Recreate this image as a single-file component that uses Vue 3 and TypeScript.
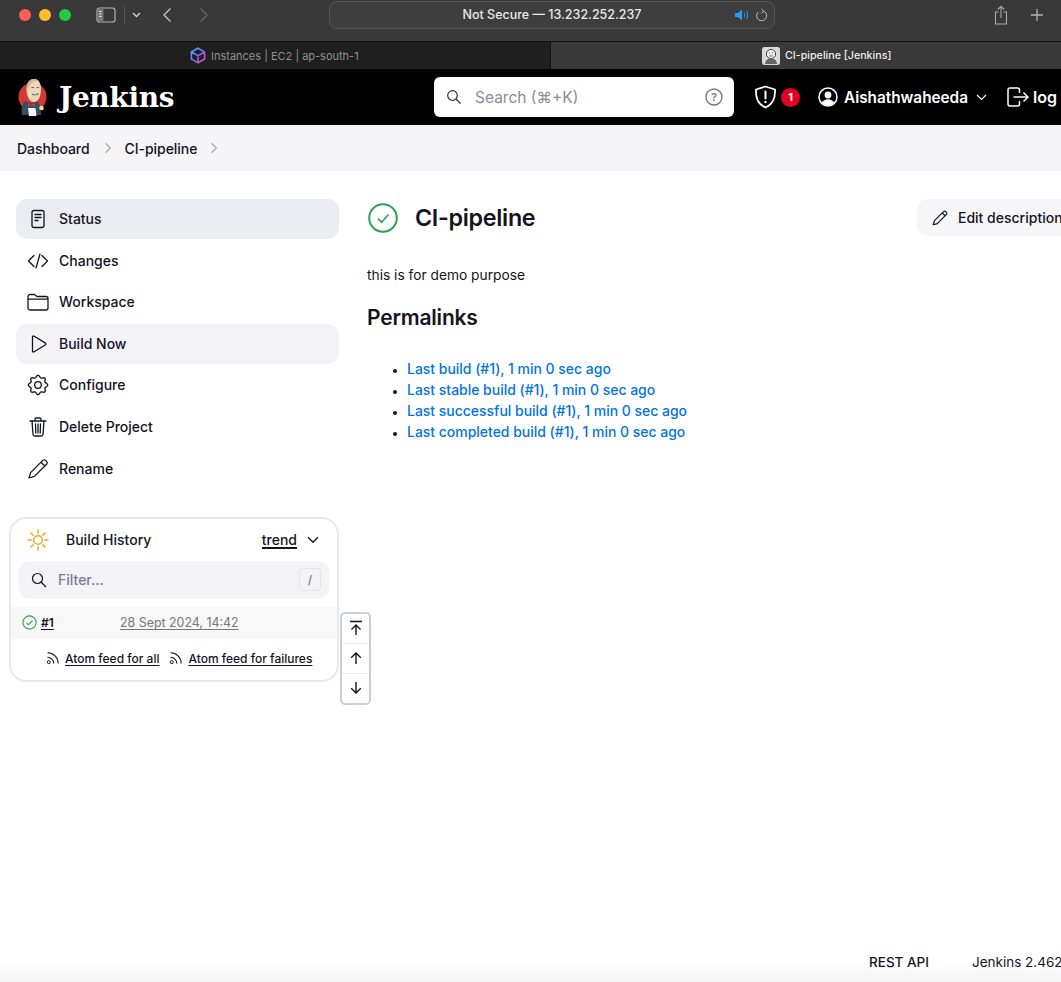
<script setup lang="ts">
interface NavItem { label: string; d: string; active?: boolean; hover?: boolean; circle?: boolean }

const cog = (): string => {
  const pts: string[] = []
  for (let i = 0; i <= 96; i++) {
    const t = (i / 96) * Math.PI * 2
    const r = 8.6 + 1.1 * Math.cos(t * 8)
    pts.push(`${(12 + r * Math.cos(t)).toFixed(2)} ${(12 + r * Math.sin(t)).toFixed(2)}`)
  }
  return 'M' + pts.join('L') + 'Z'
}

const nav: NavItem[] = [
  { label: 'Status', active: true, d: 'M8 3.500h8a2 2 0 0 1 2 2v13a2 2 0 0 1-2 2H8a2 2 0 0 1-2-2v-13a2 2 0 0 1 2-2zM9 7.500h6M9 10.500h6M9 13.500h3' },
  { label: 'Changes', d: 'M8 6.500 2.500 12 8 17.500M16 6.500l5.500 5.500-5.500 5.500M14 5l-4 14' },
  { label: 'Workspace', d: 'M2 8V6.500A2 2 0 0 1 4 4.500h4.500l2.500 2h9a2 2 0 0 1 2 2v9.500a2 2 0 0 1-2 2H4a2 2 0 0 1-2-2zM2 9.200h20' },
  { label: 'Build Now', hover: true, d: 'M6.500 5.200c0-1 .9-1.500 1.700-1l11 6.700c.8.500.8 1.600 0 2.100l-11 6.800c-.8.500-1.700 0-1.700-1z' },
  { label: 'Configure', circle: true, d: cog() },
  { label: 'Delete Project', d: 'M4 6h16M9 6V4.200C9 3.500 9.500 3 10.200 3h3.600c.7 0 1.200.5 1.200 1.200V6M6 6l1 13.500c.1.900.8 1.500 1.700 1.500h6.600c.9 0 1.600-.6 1.700-1.500L18 6M9.500 9l.3 9M12 9v9M14.500 9l-.3 9' },
  { label: 'Rename', d: 'M3 21l1.600-5.400L16.800 3.400c.8-.8 2-.8 2.800 0l1 1c.8.8.8 2 0 2.800L8.400 19.400zM15 5.200l3.800 3.800' },
]

const links: string[] = [
  'Last build (#1), 1 min 0 sec ago',
  'Last stable build (#1), 1 min 0 sec ago',
  'Last successful build (#1), 1 min 0 sec ago',
  'Last completed build (#1), 1 min 0 sec ago',
]
const feeds: string[] = ['Atom feed for all', 'Atom feed for failures']
const rays: number[] = [0, 45, 90, 135, 180, 225, 270, 315]
</script>

<template>
  <div class="page">
    <div class="toolbar">
      <div class="lights"><i class="red"></i><i class="amber"></i><i class="green"></i></div>
      <svg class="side-ico" width="20" height="16" viewBox="0 0 20 16"><rect x="1" y="1" width="18" height="14" rx="2.500" fill="none" stroke="#b5b5b5" stroke-width="1.200"/><rect x="1.500" y="1.500" width="6" height="13" rx="1.500" fill="#777"/><path d="M3 4.500h2.500M3 7h2.500M3 9.500h2.500" stroke="#ddd"/></svg>
      <span class="sep"></span>
      <svg class="drop" width="9" height="6" viewBox="0 0 9 6"><path d="M1 1l3.500 3.500L8 1" fill="none" stroke="#c9c9c9" stroke-width="1.500"/></svg>
      <svg class="back" width="10" height="16" viewBox="0 0 10 16"><path d="M8.500 1.500 2 8l6.500 6.500" fill="none" stroke="#b9b9b9" stroke-width="1.500"/></svg>
      <svg class="fwd" width="10" height="16" viewBox="0 0 10 16"><path d="M1.500 1.500 8 8l-6.500 6.500" fill="none" stroke="#626262" stroke-width="1.500"/></svg>
      <div class="url">
        <span class="url-text">Not Secure — 13.232.252.237</span>
        <svg class="speaker" width="15" height="12" viewBox="0 0 15 12"><path d="M0 4h3l4-3.500v11L3 8H0z" fill="#2a9df4"/><path d="M9 3.500c1 1.400 1 3.600 0 5M11.500 2c1.600 2.400 1.600 5.600 0 8" fill="none" stroke="#2a9df4"/></svg>
        <svg class="reload" width="13" height="14" viewBox="0 0 13 14"><path d="M8.500 3.100A5 5 0 1 1 3.300 4M6.300 1l2.300 2.100-2.100 2.300" fill="none" stroke="#bdbdbd"/></svg>
      </div>
      <svg class="share" width="14" height="20" viewBox="0 0 14 20"><path d="M4.500 7H1.500v12h11V7h-3M7 13V1.500M3.800 4.500 7 1.300l3.200 3.200" fill="none" stroke="#a9a9a9" stroke-width="1.100"/></svg>
      <svg class="plus" width="14" height="14" viewBox="0 0 14 14"><path d="M7 1v12M1 7h12" stroke="#b5b5b5" stroke-width="1.300"/></svg>
    </div>

    <div class="tabs">
      <div class="tab tab-off">
        <svg width="16" height="17" viewBox="0 0 16 17"><defs><linearGradient id="cube" x1="0" y1="0" x2="1" y2="1"><stop offset="0" stop-color="#3db6f2"/><stop offset=".55" stop-color="#8a5cf6"/><stop offset="1" stop-color="#f0568f"/></linearGradient></defs><path d="M8 1.200 14.600 5v7L8 15.800 1.400 12V5zM1.600 5 8 8.600 14.400 5M8 8.600v7" fill="none" stroke="url(#cube)" stroke-width="1.600"/></svg>
        <span>Instances | EC2 | ap-south-1</span>
      </div>
      <div class="tab tab-on">
        <svg width="18" height="18" viewBox="0 0 18 18"><rect width="18" height="18" rx="2.500" fill="#d8d8d8"/><circle cx="9" cy="7" r="4.600" fill="#eee" stroke="#444"/><path d="M3 17c.4-4 2.700-5.600 6-5.600s5.600 1.600 6 5.600z" fill="#666"/><path d="M7 6h1M10 6h1M7.500 9h3" stroke="#333" stroke-width=".8"/></svg>
        <span>CI-pipeline [Jenkins]</span>
      </div>
    </div>

    <header class="head">
      <svg class="logo" width="30" height="39" viewBox="0 0 30 39">
        <circle cx="14.500" cy="19" r="14" fill="#d33833"/>
        <path d="M4 37c-1-6 0-11 3-14l6 2 7-1c2 3 3 8 3 13z" fill="#335061"/>
        <path d="M8.500 11C8.500 5 11.500 1 16 1s7 4 7 10c0 7-2.500 13-7.500 13-4 0-7-6-7-13z" fill="#f0d6b7"/>
        <path d="M8.800 9C9 4 12 1 16 1c2 0 3.500.6 4.500 1.800C16 3 11.500 5 10.500 11z" fill="#dcb68f"/>
        <path d="M13.500 9.500h2.500M18.500 9.500H21M14 16c2 1.200 5 1 6.500-.5" stroke="#49728b" stroke-width="1.100" fill="none"/>
        <path d="M10 25l3.500 1.800L17 25v4l-3.500-1.700L10 29z" fill="#d33833"/>
        <path d="M10 30h7.500l1 8h-7.500z" fill="#f4f4f4"/>
        <circle cx="23.500" cy="30" r="2.300" fill="#f0d6b7"/>
      </svg>
      <span class="word">Jenkins</span>
      <div class="search">
        <svg class="s-ico" width="16" height="16" viewBox="0 0 16 16"><circle cx="6.500" cy="6.500" r="4.800" fill="none" stroke="#333" stroke-width="1.200"/><path d="M10 10l4.500 4.500" stroke="#333" stroke-width="1.200"/></svg>
        <span class="s-text">Search (⌘+K)</span>
        <svg class="s-help" width="18" height="18" viewBox="0 0 18 18"><circle cx="9" cy="9" r="8" fill="none" stroke="#77778f" stroke-width="1.400"/><text x="9" y="13" text-anchor="middle" font-size="11" font-weight="600" fill="#77778f" font-family="Inter, sans-serif">?</text></svg>
      </div>
      <svg class="shield" width="23" height="24" viewBox="0 0 23 24"><path d="M11.500 1.500 21 4.500c.5 8.500-2.500 15-9.500 18C4.500 19.500 1.500 13 2 4.500z" fill="none" stroke="#fff" stroke-width="1.800" stroke-linejoin="round"/><path d="M11.500 6.500v7" stroke="#fff" stroke-width="2" stroke-linecap="round"/><circle cx="11.500" cy="17" r="1.200" fill="#fff"/></svg>
      <span class="badge">1</span>
      <svg class="user" width="20" height="20" viewBox="0 0 20 20"><circle cx="10" cy="10" r="9" fill="none" stroke="#fff" stroke-width="1.500"/><circle cx="10" cy="8" r="3.400" fill="#fff"/><path d="M3.800 16c1.200-2.700 3.500-3.800 6.200-3.800s5 1.100 6.200 3.800A9 9 0 0 1 3.800 16z" fill="#fff"/></svg>
      <span class="uname">Aishathwaheeda</span>
      <svg class="u-drop" width="11" height="7" viewBox="0 0 11 7"><path d="M1 1l4.500 4.500L10 1" fill="none" stroke="#fff" stroke-width="1.200"/></svg>
      <svg class="logout" width="22" height="20" viewBox="0 0 22 20"><path d="M12.500 6V3a2 2 0 0 0-2-2H3a2 2 0 0 0-2 2v14a2 2 0 0 0 2 2h7.500a2 2 0 0 0 2-2v-3M6.500 10H21M16.500 5.500 21 10l-4.500 4.500" fill="none" stroke="#fff" stroke-width="1.500"/></svg>
      <span class="logtext">log out</span>
    </header>

    <nav class="crumbs">
      <span>Dashboard</span>
      <svg width="8" height="12" viewBox="0 0 8 12"><path d="M1.500 1.200 6.300 6l-4.800 4.800" fill="none" stroke="#a8a8ba" stroke-width="1.300"/></svg>
      <span>CI-pipeline</span>
      <svg width="8" height="12" viewBox="0 0 8 12"><path d="M1.500 1.200 6.300 6l-4.800 4.800" fill="none" stroke="#a8a8ba" stroke-width="1.300"/></svg>
    </nav>

    <div class="body">
      <aside class="side">
        <ul class="menu">
          <li v-for="n in nav" :key="n.label" class="item" :class="{ active: n.active, hover: n.hover }">
            <svg width="24" height="24" viewBox="0 0 24 24" fill="none" stroke="#14141f" stroke-width="1.300" stroke-linecap="round" stroke-linejoin="round">
              <path :d="n.d" />
              <circle v-if="n.circle" cx="12" cy="12" r="3.300" />
            </svg>
            <span>{{ n.label }}</span>
          </li>
        </ul>

        <section class="hist">
          <div class="h-top">
            <svg width="22" height="22" viewBox="0 0 22 22">
              <circle cx="11" cy="11" r="4.300" fill="none" stroke="#f5a623" stroke-width="1.500"/>
              <path v-for="r in rays" :key="r" d="M11 1v3.300" stroke="#f5a623" stroke-width="1.500" stroke-linecap="round" :transform="`rotate(${r} 11 11)`"/>
            </svg>
            <span class="h-title">Build History</span>
            <span class="trend">trend</span>
            <svg width="12" height="8" viewBox="0 0 12 8"><path d="M1 1.200l5 5 5-5" fill="none" stroke="#14141f" stroke-width="1.400"/></svg>
          </div>
          <div class="filter">
            <svg width="16" height="16" viewBox="0 0 16 16"><circle cx="6.500" cy="6.500" r="5" fill="none" stroke="#14141f" stroke-width="1.200"/><path d="M10 10l5 5" stroke="#14141f" stroke-width="1.200"/></svg>
            <span class="f-text">Filter...</span>
            <kbd>/</kbd>
          </div>
          <div class="b-row">
            <svg width="15" height="15" viewBox="0 0 15 15"><circle cx="7.500" cy="7.500" r="6.600" fill="none" stroke="#30a14e" stroke-width="1.100"/><path d="M4.600 7.800l2 2L10.500 5.300" fill="none" stroke="#30a14e" stroke-width="1.100"/></svg>
            <span class="b-num">#1</span>
            <span class="b-date">28 Sept 2024, 14:42</span>
          </div>
          <div class="feeds">
            <span v-for="f in feeds" :key="f" class="feed">
              <svg width="14" height="14" viewBox="0 0 14 14"><circle cx="2.800" cy="11.200" r="1.500" fill="none" stroke="#14141f"/><path d="M1.500 6.200a6.300 6.300 0 0 1 6.300 6.300M1.500 1.800a10.700 10.700 0 0 1 10.700 10.700" fill="none" stroke="#14141f" stroke-width="1.100"/></svg>
              <span class="f-link">{{ f }}</span>
            </span>
          </div>
          <div class="pager">
            <div class="pg"><svg width="14" height="16" viewBox="0 0 14 16"><path d="M1 1.500h12M7 15V5M2.500 9.500 7 5l4.500 4.500" fill="none" stroke="#14141f" stroke-width="1.400"/></svg></div>
            <div class="pg"><svg width="14" height="14" viewBox="0 0 14 14"><path d="M7 13V2M2.200 6.800 7 2l4.800 4.800" fill="none" stroke="#14141f" stroke-width="1.400"/></svg></div>
            <div class="pg"><svg width="14" height="14" viewBox="0 0 14 14"><path d="M7 1v11M2.200 7.200 7 12l4.800-4.800" fill="none" stroke="#14141f" stroke-width="1.400"/></svg></div>
          </div>
        </section>
      </aside>

      <main class="main">
        <div class="title-row">
          <svg class="t-ico" width="30" height="30" viewBox="0 0 30 30"><circle cx="15" cy="15" r="13.800" fill="none" stroke="#30a14e" stroke-width="2"/><path d="M9.800 15.500l3.700 3.700 7-7.700" fill="none" stroke="#30a14e" stroke-width="1.700"/></svg>
          <h1>CI-pipeline</h1>
          <button class="edit" type="button">
            <svg width="18" height="18" viewBox="0 0 24 24"><path d="M3 21l1.600-5.400L16.800 3.400c.8-.8 2-.8 2.800 0l1 1c.8.8.8 2 0 2.800L8.400 19.400zM15 5.200l3.800 3.800" fill="none" stroke="#14141f" stroke-width="1.600" stroke-linejoin="round"/></svg>
            <span>Edit description</span>
          </button>
        </div>
        <p class="desc">this is for demo purpose</p>
        <h2>Permalinks</h2>
        <ul class="links">
          <li v-for="l in links" :key="l"><a>{{ l }}</a></li>
        </ul>
      </main>
    </div>

    <footer class="foot">
      <span class="api">REST API</span>
      <span class="ver">Jenkins 2.462.2</span>
    </footer>
  </div>
</template>

<style>
html, body { margin: 0; background: #fff; overflow: hidden; }
</style>

<style scoped>
.page { width: 1061px; height: 982px; overflow: hidden; display: flex; flex-direction: column; font-family: Inter, "Liberation Sans", sans-serif; color: #14141f; background: #fff; }
svg { display: block; flex: none; }

.toolbar { height: 42px; flex: none; background: #393939; border-bottom: 1px solid #111; display: flex; align-items: center; padding-bottom: 12px; box-sizing: border-box; }
.lights { display: flex; gap: 8px; margin-left: 19px; flex: none; }
.lights i { width: 12px; height: 12px; border-radius: 50%; display: block; }
.red { background: #ff5f57; } .amber { background: #febc2e; } .green { background: #28c840; }
.side-ico { margin-left: 25px; }
.sep { width: 1px; height: 18px; background: #555; margin-left: 8px; flex: none; }
.drop { margin-left: 7px; }
.back { margin-left: 21px; }
.fwd { margin-left: 27px; }
.url { width: 446px; flex: none; height: 28px; margin-left: 120px; box-sizing: border-box; border: 1px solid #555; border-radius: 8px; background: #3e3e3e; display: flex; align-items: center; position: relative; padding-right: 6px; }
.url-text { position: absolute; left: 0; right: 0; text-align: center; color: #e8e8e8; font-size: 12.500px; font-weight: 500; }
.speaker { margin-left: auto; margin-right: 5px; }
.share { margin-left: 219px; }
.plus { margin-left: 22px; }

.tabs { height: 27px; flex: none; display: flex; font-size: 11px; }
.tab { display: flex; align-items: center; gap: 5px; box-sizing: border-box; }
.tab-off { width: 551px; background: #1f1f1f; color: #8f8f8f; padding-left: 190px; border-right: 1px solid #111; }
.tab-on { flex: 1; background: #393939; color: #ececec; padding-left: 211px; font-size: 10.700px; font-weight: 500; }

.head { height: 56px; flex: none; background: #000; display: flex; align-items: center; color: #fff; white-space: nowrap; }
.head > * { flex: none; }
.logo { margin-left: 18px; }
.word { margin-left: 11px; width: 117px; font-family: "DejaVu Serif", "Liberation Serif", serif; font-weight: 700; font-size: 28px; letter-spacing: -.35px; }
.search { margin-left: 258px; width: 300px; height: 40px; background: #fff; border-radius: 6px; display: flex; align-items: center; box-sizing: border-box; padding: 0 11px; }
.s-ico { margin-left: 1px; }
.s-text { margin-left: 13px; color: #8a8a9a; font-size: 15.500px; }
.s-help { margin-left: auto; }
.shield { margin-left: 20px; }
.badge { margin-left: 4px; width: 19px; height: 19px; border-radius: 50%; background: #e6001f; font-size: 11px; font-weight: 700; text-align: center; line-height: 19px; }
.user { margin-left: 18px; }
.uname { margin-left: 6px; font-weight: 600; font-size: 15.300px; width: 123px; }
.u-drop { margin-left: 9px; }
.logout { margin-left: 20px; }
.logtext { margin-left: 4px; font-size: 16px; font-weight: 600; }

.crumbs { height: 46px; flex: none; background: #f5f5f8; display: flex; align-items: center; padding-left: 17px; font-size: 14px; font-weight: 500; color: #14141f; letter-spacing: -.05px; }
.crumbs svg { margin: 0 13px 0 14px; }
.crumbs svg:last-child { margin-left: 13px; }

.body { flex: 1; display: flex; min-height: 0; }
.side { width: 339px; flex: none; padding: 28px 0 0 9px; box-sizing: border-box; }
.menu { list-style: none; margin: 0 0 0 7px; padding: 0; display: flex; flex-direction: column; gap: 1.600px; }
.item { height: 40px; border-radius: 11px; display: flex; align-items: center; gap: 9px; padding-left: 10px; font-size: 14px; font-weight: 500; }
.item span { margin-top: -1px; }
.item.active { background: #ecedf2; }
.item.hover { background: #f3f3f7; }

.hist { position: relative; margin-top: 28px; width: 330px; height: 165px; box-sizing: border-box; border: 2px solid #e9e9ef; border-radius: 17px; }
.h-top { height: 42px; display: flex; align-items: center; padding: 0 18px 0 16px; font-size: 14px; font-weight: 500; }
.h-title { margin-left: 17px; flex: 1; }
.trend { border-bottom: 2px solid #14141f; margin-right: 10px; line-height: 15px; margin-top: 1px; }
.filter { margin: 0 8px; height: 38px; background: #f2f2f7; border-radius: 11px; display: flex; align-items: center; padding: 0 8px 0 12px; }
.f-text { margin-left: 11px; flex: 1; color: #7d7d96; font-size: 14px; font-weight: 500; }
kbd { width: 22px; height: 23px; box-sizing: border-box; border: 1px solid #e2e2e9; border-radius: 4px; font: 500 12px Inter, sans-serif; color: #7d7d96; text-align: center; line-height: 21px; }
.b-row { margin-top: 8px; height: 32px; background: #f8f8f8; display: flex; align-items: center; padding-left: 11px; font-size: 12px; }
.b-num { margin-left: 4px; width: 79px; text-decoration: underline; text-underline-offset: 2px; font-weight: 600; }
.b-date { color: #767682; font-size: 12.400px; text-decoration: underline; text-underline-offset: 2px; }
.feeds { display: flex; padding: 12px 0 0 35px; gap: 10px; font-size: 12px; font-weight: 500; white-space: nowrap; }
.feed { display: flex; align-items: center; gap: 5px; }
.f-link { text-decoration: underline; text-underline-offset: 2px; }
.pager { position: absolute; left: 329px; top: 93px; width: 31px; height: 93px; box-sizing: border-box; border: 2px solid #c6d0d8; border-radius: 5px; background: #fff; display: flex; flex-direction: column; }
.pg { flex: 1; display: flex; align-items: center; justify-content: center; border-bottom: 1px solid #eeeeee; }
.pg:last-child { border-bottom: 0; }

.main { flex: none; width: 770px; margin-left: 28px; padding-top: 28px; }
.title-row { display: flex; align-items: flex-start; height: 38px; }
.t-ico { margin: 4px 0 0 1px; }
h1 { margin: 3px 0 0 17px; font-size: 23.300px; line-height: 32px; font-weight: 600; letter-spacing: -.3px; flex: 1; }
.edit { width: 220px; height: 37px; border: 0; background: #f6f6f9; border-radius: 11px; display: flex; align-items: center; gap: 9px; padding: 0 0 0 14px; font: 500 14px Inter, sans-serif; color: #14141f; flex: none; }
.desc { margin: 28px 0 0; font-size: 13.750px; line-height: 20px; }
h2 { margin: 20px 0 0; font-size: 21px; font-weight: 600; line-height: 26px; letter-spacing: -.2px; }
.links { margin: 27px 0 0; padding: 0 0 0 40px; font-size: 14px; line-height: 21px; letter-spacing: -.02px; }
.links li::marker { font-size: 11px; }
.links a { color: #0074e0; font-weight: 500; }

.foot { height: 40px; flex: none; background: linear-gradient(#fff 50%, #f4f4f4); display: flex; align-items: flex-start; padding: 12px 0 0 869px; box-sizing: border-box; white-space: nowrap; font-size: 13.500px; line-height: 17px; }
.api { font-weight: 500; }
.ver { margin-left: 43px; }
</style>
